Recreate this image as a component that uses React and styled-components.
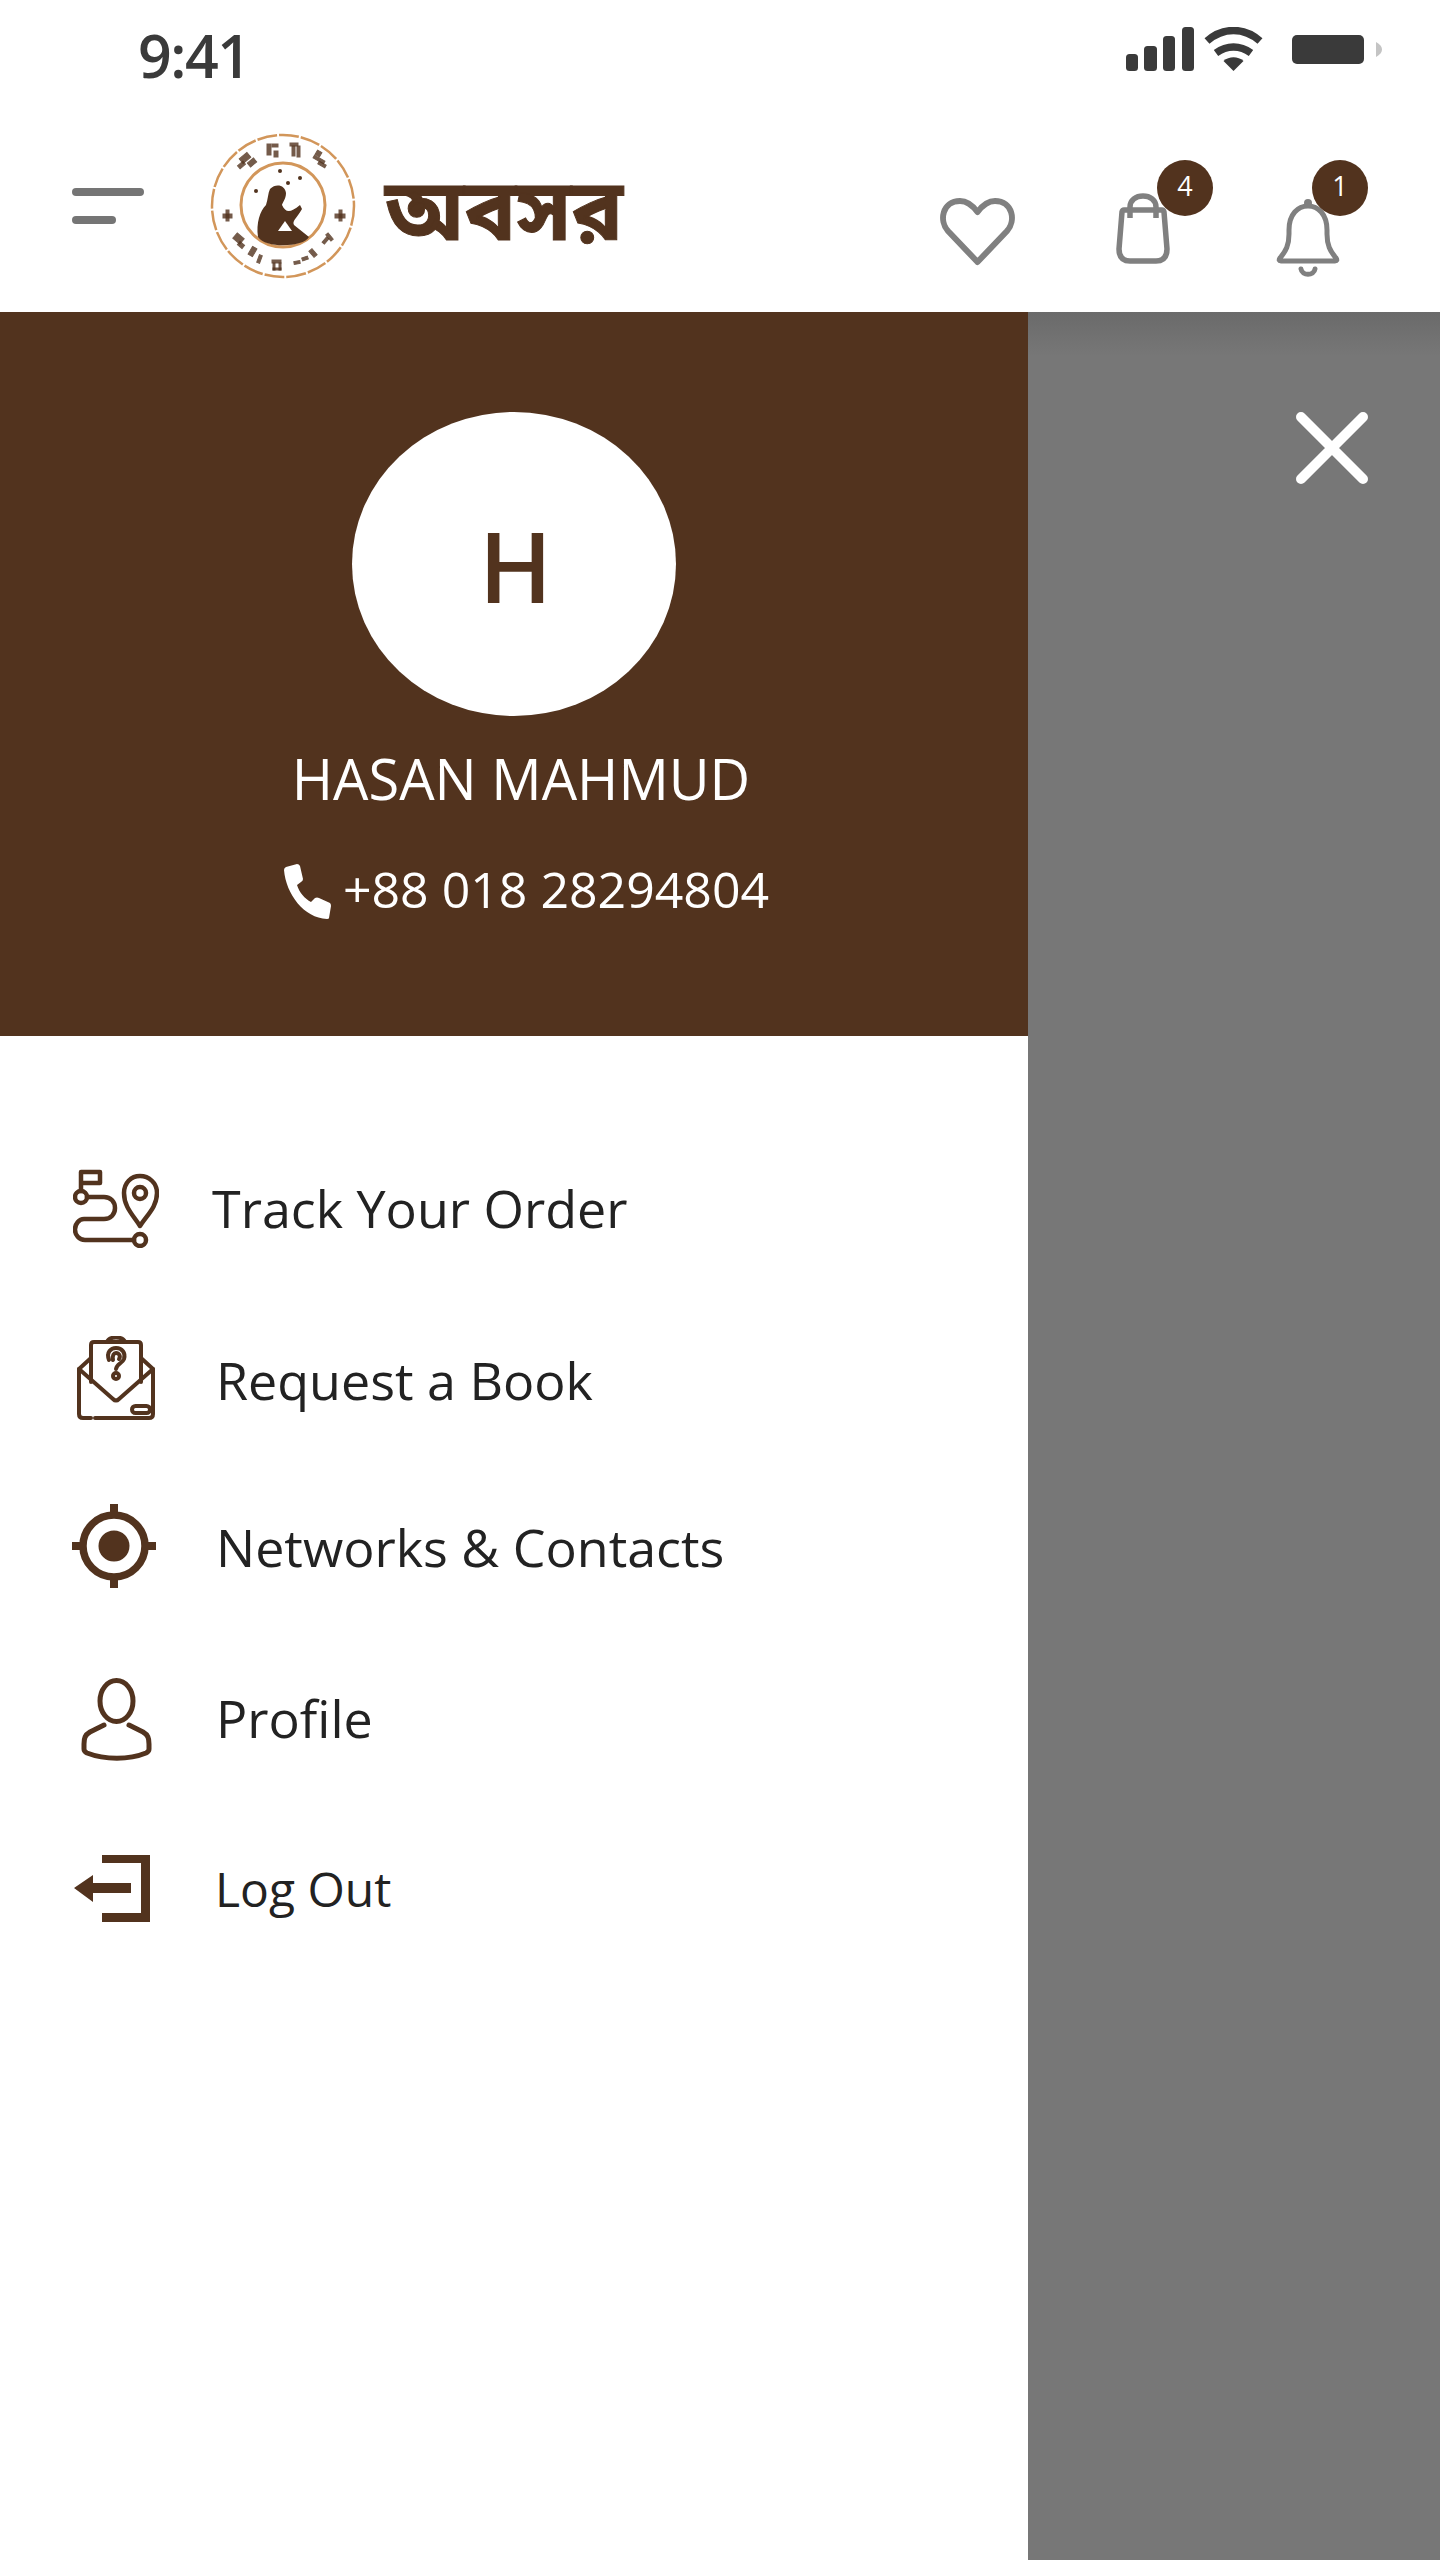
import React from 'react';
import styled, { createGlobalStyle } from 'styled-components';

const BROWN = '#52331e';
const GREY = '#808080';

const GlobalStyle = createGlobalStyle`
  html, body {
    margin: 0;
    padding: 0;
    background: #fff;
    font-family: 'Open Sans', 'Noto Sans', sans-serif;
  }
`;

const Page = styled.div`
  width: 1440px;
  height: 2560px;
  display: flex;
  flex-direction: column;
  overflow: hidden;
  background: #fff;
`;

const StatusBar = styled.div`
  height: 100px;
  display: flex;
  align-items: flex-start;
  padding: 0 58px 0 138px;
`;

const Time = styled.div`
  margin-top: 15px;
  font-size: 59px;
  line-height: 80px;
  font-weight: 600;
  letter-spacing: -1.5px;
  color: #3a3a3a;
`;

const StatusIcons = styled.div`
  margin-left: auto;
  margin-top: 27px;
  display: flex;
  align-items: flex-start;
  svg {
    display: block;
  }
`;

const Wifi = styled.svg`
  margin-left: 9px;
`;

const Battery = styled.svg`
  margin-left: 28px;
  margin-top: 8px;
`;

const Header = styled.header`
  height: 212px;
  display: flex;
  align-items: center;
  padding: 0 100px 0 72px;
`;

const Burger = styled.button`
  width: 72px;
  height: 36px;
  padding: 0;
  border: 0;
  background: none;
  display: flex;
  flex-direction: column;
  justify-content: space-between;
  align-items: flex-start;
  span {
    display: block;
    height: 8px;
    border-radius: 4px;
    background: #757575;
  }
  span:first-child {
    width: 72px;
  }
  span:last-child {
    width: 44px;
  }
`;

const Logo = styled.svg`
  margin-left: 66px;
  flex: none;
`;

const Wordmark = styled.div`
  margin: 24px 0 0 29px;
  font-size: 86px;
  line-height: 90px;
  font-weight: 700;
  -webkit-text-stroke: 1px ${BROWN};
  color: ${BROWN};
  font-family: 'Noto Sans Bengali', 'Noto Sans', 'Liberation Sans', sans-serif;
`;

const HeaderActions = styled.div`
  margin-left: auto;
  align-self: flex-start;
  display: flex;
  align-items: flex-start;
`;

const Action = styled.div`
  position: relative;
  margin-top: ${(p) => p.$top}px;
  margin-left: ${(p) => p.$left}px;
  svg {
    display: block;
  }
`;

const Badge = styled.span`
  position: absolute;
  left: ${(p) => p.$x}px;
  top: ${(p) => p.$y}px;
  width: 56px;
  height: 56px;
  border-radius: 50%;
  background: ${BROWN};
  color: #fff;
  font-size: 27px;
  line-height: 52px;
  text-align: center;
`;

const Body = styled.div`
  flex: 1;
  display: flex;
`;

const Drawer = styled.aside`
  width: 1028px;
  display: flex;
  flex-direction: column;
  background: #fff;
`;

const Profile = styled.section`
  height: 724px;
  padding-top: 100px;
  box-sizing: border-box;
  background: ${BROWN};
  display: flex;
  flex-direction: column;
  align-items: center;
  color: #fff;
`;

const Avatar = styled.div`
  width: 324px;
  height: 304px;
  border-radius: 50%;
  background: #fff;
  color: ${BROWN};
  font-size: 98px;
  font-weight: 600;
  line-height: 307px;
  text-align: center;
  text-indent: 3px;
`;

const Name = styled.div`
  margin: 25px 0 0 14px;
  font-size: 56px;
  line-height: 74px;
  white-space: nowrap;
`;

const Phone = styled.div`
  margin: 39px 0 0 25px;
  display: flex;
  align-items: center;
  gap: 12px;
  font-size: 50px;
  line-height: 70px;
  white-space: nowrap;
  svg {
    margin-top: 4px;
  }
`;

const Menu = styled.nav`
  padding-top: 120px;
  display: flex;
  flex-direction: column;
`;

const MenuRow = styled.a`
  height: 104px;
  margin-top: ${(p) => p.$gap}px;
  display: flex;
  align-items: center;
  color: #222;
`;

const IconSlot = styled.div`
  width: ${(p) => p.$width}px;
  padding-left: ${(p) => p.$pad}px;
  box-sizing: border-box;
  flex: none;
  svg {
    display: block;
  }
`;

const MenuLabel = styled.span`
  font-size: ${(p) => p.$size}px;
  line-height: 70px;
  margin-top: ${(p) => p.$shift}px;
`;

const Scrim = styled.div`
  flex: 1;
  padding: 100px 72px 0 0;
  display: flex;
  justify-content: flex-end;
  align-items: flex-start;
  background: linear-gradient(#6a6a6a, #777 44px);
`;

const CloseButton = styled.button`
  padding: 0;
  border: 0;
  background: none;
  svg {
    display: block;
  }
`;

function SealLogo() {
  // blurred lettering of the seal, kept as plain smudges
  const marks = [
    [30, 22, 10, 6, -40], [38, 27, 8, 5, -40], [28, 30, 7, 4, -40],
    [57, 11, 4, 11, 0], [62, 11, 6, 3, 0], [64, 18, 4, 6, 0],
    [80, 10, 8, 3, 0], [82, 13, 3, 10, 0], [87, 13, 3, 11, 0],
    [106, 18, 5, 5, 30], [103, 25, 12, 3, 30], [108, 30, 8, 3, 30],
    [13, 81, 9, 4, 0], [16, 77, 3, 11, 0], [125, 81, 10, 4, 0], [129, 77, 3, 11, 0],
    [24, 102, 9, 7, 40], [28, 110, 6, 4, 40],
    [40, 114, 5, 9, 30], [48, 122, 3, 8, 20],
    [62, 127, 9, 3, 0], [63, 130, 2, 7, 0], [69, 130, 2, 7, 0], [63, 135, 8, 2, 0],
    [84, 128, 6, 3, -10], [92, 124, 6, 3, -20], [101, 116, 4, 8, -40], [112, 106, 7, 3, -50], [118, 100, 3, 8, -40],
  ];
  return (
    <Logo width="146" height="146" viewBox="0 0 146 146">
      <circle cx="73" cy="73" r="71" fill="#fff" stroke="#d2965a" strokeWidth="2.500" strokeDasharray="20 2" />
      <circle cx="73" cy="72" r="42" fill="#fff" stroke="#d2965a" strokeWidth="3" />
      {marks.map(([x, y, w, h, a]) => (
        <rect
          key={`${x}-${y}`}
          x={x}
          y={y}
          width={w}
          height={h}
          fill={BROWN}
          stroke={BROWN}
          strokeWidth="1"
          opacity="0.8"
          transform={`rotate(${a} ${x + w / 2} ${y + h / 2})`}
        />
      ))}
      <circle cx="46" cy="58" r="2" fill={BROWN} />
      <circle cx="70" cy="38" r="2" fill={BROWN} />
      <circle cx="78" cy="50" r="2" fill={BROWN} />
      <circle cx="90" cy="45" r="2" fill={BROWN} />
      <path
        d="M60 56C66 50 75 52 76 60C76 66 72 70 72 72C76 80 80 80 90 72L92 76C86 86 82 88 84 92L99 104C94 114 56 116 48 104C46 90 50 78 56 72C58 66 58 60 60 56Z"
        fill={BROWN}
      />
      <path d="M68 98L75 88L82 98Z" fill="#fff" />
    </Logo>
  );
}

const TrackIcon = () => (
  <svg width="86" height="79" viewBox="0 0 86 79" fill="none" stroke={BROWN} strokeWidth="4.500" strokeLinecap="round" strokeLinejoin="round">
    <path d="M8 22V3H27V14H8" />
    <circle cx="8" cy="28" r="6" />
    <path d="M14 28H31C38 28 42 33 42 39C42 45 38 50 31 50H11C6 50 2 55 2 60.500C2 66 6 71 12 71H61" />
    <circle cx="67" cy="71" r="6" />
    <path d="M67 57C60 46 51 38 51 24C51 14 58 7 67 7C76 7 84 14 84 24C84 38 74 46 67 57Z" />
    <circle cx="67" cy="24" r="6" />
  </svg>
);

const RequestIcon = () => (
  <svg width="78" height="84" viewBox="0 0 78 84" fill="none" stroke={BROWN} strokeWidth="4" strokeLinecap="round" strokeLinejoin="round">
    <path d="M2 33V78Q2 82 6 82H14M18 82H72Q76 82 76 78V33" />
    <path d="M2 33L36 63Q39 66 42 63L76 33L64 22M2 33L14 22" />
    <path d="M14 46V9Q14 6 17 6H61Q64 6 64 9V46" />
    <path d="M30 6C32 0 46 0 48 6" />
    <path d="M32 24C29 16 34 12 39 12C45 12 49 17 47 23C45 28 40 27 39 33M36 24C35 19 37 17 39 17C42 17 44 20 42 23" />
    <circle cx="39" cy="40" r="3" />
    <rect x="55" y="70" width="18" height="7" rx="3.500" />
  </svg>
);

const TargetIcon = () => (
  <svg width="84" height="84" viewBox="0 0 84 84" fill="none" stroke={BROWN}>
    <circle cx="42" cy="42" r="31" strokeWidth="7.500" />
    <circle cx="42" cy="42" r="15.500" fill={BROWN} stroke="none" />
    <path d="M42 0V10M42 74V84M0 42H10M74 42H84" strokeWidth="8" />
  </svg>
);

const PersonIcon = () => (
  <svg width="71" height="83" viewBox="0 0 71 83" fill="none" stroke={BROWN} strokeWidth="5" strokeLinecap="round" strokeLinejoin="round">
    <ellipse cx="35.500" cy="23" rx="16.500" ry="20.500" />
    <path d="M23 47L9 54C4 57 3 60 3 66V71C3 73 4 74 6 75C24 82 48 82 65 75C67 74 68 73 68 71V66C68 60 67 57 62 54L48 47" />
  </svg>
);

const LogoutIcon = () => (
  <svg width="76" height="67" viewBox="0 0 76 67" fill={BROWN}>
    <path d="M28 0H76V67H28V58H67V8H28Z" />
    <path d="M0 33L19 20V28H57V38H19V47Z" />
  </svg>
);

const menuItems = [
  { label: 'Track Your Order', Icon: TrackIcon, gap: 0, width: 212, pad: 73, size: 52, shift: 0 },
  { label: 'Request a Book', Icon: RequestIcon, gap: 66, width: 216, pad: 77, size: 52, shift: 4 },
  { label: 'Networks & Contacts', Icon: TargetIcon, gap: 64, width: 216, pad: 72, size: 52, shift: 2 },
  { label: 'Profile', Icon: PersonIcon, gap: 69, width: 216, pad: 81, size: 52, shift: -2 },
  { label: 'Log Out', Icon: LogoutIcon, gap: 65, width: 215, pad: 74, size: 48, shift: 2 },
];

export default function App() {
  return (
    <Page>
      <GlobalStyle />
      <StatusBar>
        <Time>9:41</Time>
        <StatusIcons>
          <svg width="68" height="44" viewBox="0 0 68 44" fill="#3a3a3a">
            <rect x="0" y="27" width="12" height="17" rx="3.500" />
            <rect x="18" y="19" width="13" height="25" rx="3.500" />
            <rect x="37" y="9" width="12" height="35" rx="3.500" />
            <rect x="56" y="0" width="12" height="44" rx="3.500" />
          </svg>
          <Wifi width="61" height="44" viewBox="0 0 61 44" fill="none" stroke="#3a3a3a">
            <path d="M4 14C20 0 41 0 57 14" strokeWidth="7.500" />
            <path d="M13 26C24 18 37 18 48 26" strokeWidth="7.500" />
            <path d="M30.500 44L20.500 34C26 29 35 29 40.500 34Z" fill="#3a3a3a" stroke="none" />
          </Wifi>
          <Battery width="90" height="29" viewBox="0 0 90 29">
            <rect x="0" y="0" width="72" height="29" rx="5" fill="#3a3a3a" />
            <path d="M84 7C88 9 90 12 90 14.500C90 17 88 20 84 22Z" fill="#c4c4c4" />
          </Battery>
        </StatusIcons>
      </StatusBar>

      <Header>
        <Burger aria-label="Menu">
          <span />
          <span />
        </Burger>
        <SealLogo />
        <Wordmark>অবসর</Wordmark>
        <HeaderActions>
          <Action $top={98}>
            <svg width="77" height="68" viewBox="0 0 77 68" fill="none" stroke={GREY} strokeWidth="6" strokeLinejoin="round">
              <path d="M38.500 64L9 33C0 23 3 3 21 3C29 3 34 8 38.500 14C43 8 48 3 56 3C74 3 77 23 68 33Z" />
            </svg>
          </Action>
          <Action $top={93} $left={100}>
            <svg width="54" height="71" viewBox="0 0 54 71" fill="none" stroke={GREY} strokeWidth="5.500" strokeLinejoin="round">
              <path d="M8 17H46Q47.500 17 48 19L51 56Q51 68 40 68H14Q3 68 3 56L6 19Q6.500 17 8 17Z" />
              <path d="M14 25V14C14 7 20 3 27 3C34 3 40 7 40 14V25" />
            </svg>
            <Badge $x={41} $y={-33}>4</Badge>
          </Action>
          <Action $top={98} $left={106}>
            <svg width="64" height="79" viewBox="0 0 64 79" fill="none" stroke={GREY} strokeWidth="5" strokeLinecap="round" strokeLinejoin="round">
              <path d="M13 32C13 16 22 8 32 8C42 8 51 16 51 32V36C51 47 54 53 60 60Q62 63 59 63H5Q2 63 4 60C10 53 13 47 13 36Z" />
              <circle cx="32" cy="5" r="4" fill={GREY} stroke="none" />
              <path d="M25 71C26 78 38 78 39 71" />
            </svg>
            <Badge $x={36} $y={-38}>1</Badge>
          </Action>
        </HeaderActions>
      </Header>

      <Body>
        <Drawer>
          <Profile>
            <Avatar>H</Avatar>
            <Name>HASAN MAHMUD</Name>
            <Phone>
              <svg width="47" height="55" viewBox="0 0 47 55" fill="#fff">
                <path d="M2 3L13 0Q15 0 16 2L19 15Q19 17 17 18L13 21C15 28 21 35 27 38L31 34Q33 33 35 34L46 39Q47 40 47 42L45 54Q45 55 43 55C20 54 2 30 0 6Q0 4 2 3Z" />
              </svg>
              +88 018 28294804
            </Phone>
          </Profile>
          <Menu>
            {menuItems.map(({ label, Icon, gap, width, pad, size, shift }) => (
              <MenuRow key={label} $gap={gap}>
                <IconSlot $width={width} $pad={pad}>
                  <Icon />
                </IconSlot>
                <MenuLabel $size={size} $shift={shift}>{label}</MenuLabel>
              </MenuRow>
            ))}
          </Menu>
        </Drawer>
        <Scrim>
          <CloseButton aria-label="Close">
            <svg width="72" height="72" viewBox="0 0 72 72" fill="none" stroke="#fff" strokeWidth="10" strokeLinecap="round">
              <path d="M5 5L67 67M67 5L5 67" />
            </svg>
          </CloseButton>
        </Scrim>
      </Body>
    </Page>
  );
}
